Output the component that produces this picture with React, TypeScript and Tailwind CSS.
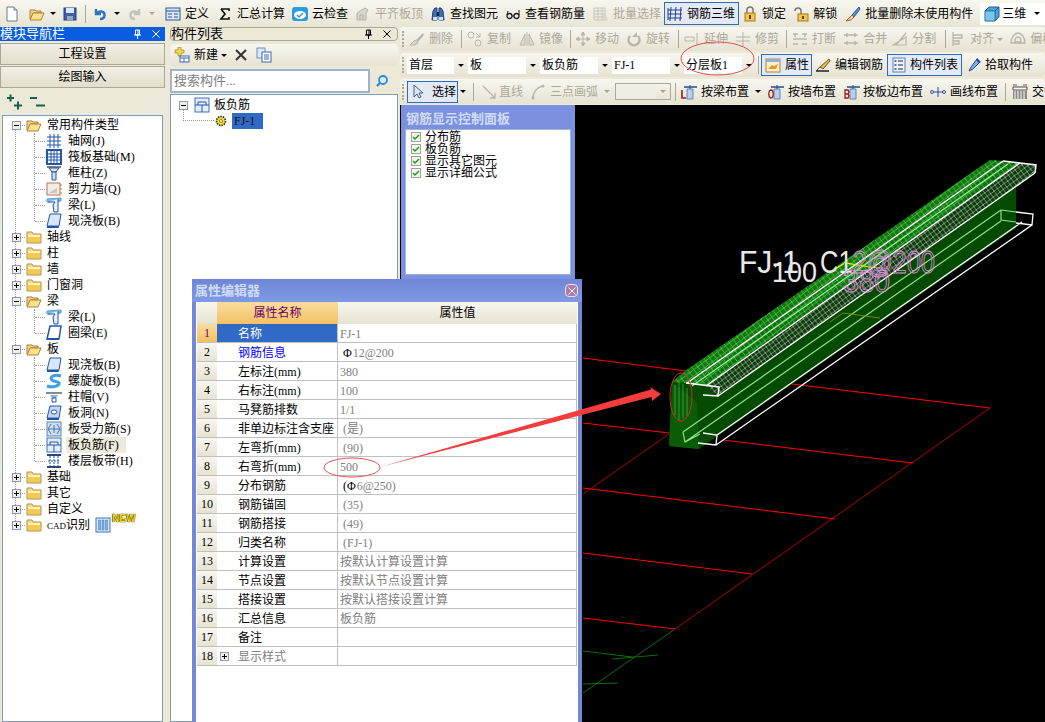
import type { ReactNode } from "react"
import clsx from "clsx"

// ---- small helpers ----
function I({ children, className }: { children: ReactNode; className?: string }) {
	return (
		<svg viewBox="0 0 16 16" className={clsx("h-4 w-4 shrink-0", className)}>
			{children}
		</svg>
	)
}

function Arrow({ className }: { className?: string }) {
	return (
		<svg viewBox="0 0 6 3" className={clsx("h-[3px] w-[6px] shrink-0", className)}>
			<path d="M0 0h6L3 3z" fill="currentColor" />
		</svg>
	)
}

function Sep({ className }: { className?: string }) {
	return <div className={clsx("h-[18px] w-px shrink-0 bg-[#aca899]", className)} />
}

function Grip() {
	return <div className="ml-[2px] h-[16px] w-[3px] shrink-0 border-l-2 border-dotted border-[#aca899]" />
}

function Tool({ icon, label, className, off }: { icon: ReactNode; label: string; className?: string; off?: boolean }) {
	return (
		<div className={clsx("flex shrink-0 items-center gap-1", off && "text-[#aca899]", className)}>
			{icon}
			<span className="whitespace-nowrap">{label}</span>
		</div>
	)
}

// ---- toolbar icons ----
const FileNew = (
	<I>
		<path d="M3 1h7l3 3v11H3z" fill="#fff" stroke="#6b7a8c" />
		<path d="M10 1v3h3" fill="#dde" stroke="#6b7a8c" />
	</I>
)
const OpenFolder = (
	<I>
		<path d="M1 4h5l1 1h5v2H5L2 13H1z" fill="#f3d27a" stroke="#a8843c" />
		<path d="M4 7h11l-3 7H1z" fill="#fbe08f" stroke="#a8843c" />
	</I>
)
const ClosedFolder = (
	<I>
		<path d="M1 3h5l1 2h8v9H1z" fill="#fbdc7d" stroke="#b09048" />
		<path d="M2 6h12v7H2z" fill="#f6c94f" />
		<path d="M2 6h12v2H2z" fill="#fff2bf" />
	</I>
)
const Save = (
	<I>
		<rect x="2" y="2" width="12" height="12" fill="#3f5fa8" stroke="#25407c" />
		<rect x="4" y="2" width="8" height="5" fill="#dfe6f4" />
		<rect x="5" y="10" width="6" height="4" fill="#9aa7c4" />
	</I>
)
const Undo = (
	<I>
		<path d="M4 3v5h5M4.500 7.500C7 4 13 5 12.500 9.500 12.200 12 10 13 8 13" fill="none" stroke="#2f74c4" strokeWidth="2.400" />
	</I>
)
const Redo = (
	<I>
		<path d="M12 3v5H7M11.500 7.500C9 4 3 5 3.500 9.500 3.800 12 6 13 8 13" fill="none" stroke="#c4c3b8" strokeWidth="2.400" />
	</I>
)
const Define = (
	<I>
		<rect x="1" y="2" width="14" height="12" fill="#dbe7f6" stroke="#2b5797" />
		<path d="M1 5h14M3 8h4M3 11h4M9 8h4M9 11h4" stroke="#2b5797" />
	</I>
)
const Sigma = (
	<I>
		<path d="M4 3h8v2M4 3l4 5-4 5h8v-2" fill="none" stroke="#111" strokeWidth="1.600" />
	</I>
)
const CloudCheck = (
	<I>
		<rect x="0" y="1" width="16" height="14" rx="3" fill="#2e9be0" />
		<ellipse cx="8" cy="9" rx="6" ry="4" fill="#fff" />
		<path d="M5 9l2 2 4-4" fill="none" stroke="#2e9be0" strokeWidth="1.500" />
	</I>
)
const AlignTop = (
	<I>
		<path d="M2 14V7l8-5 3 2-2 3v7z" fill="#d9d7cc" stroke="#b3b1a6" />
		<path d="M5 14V9h3v5" fill="none" stroke="#b3b1a6" />
	</I>
)
const Binoculars = (
	<I>
		<path d="M2 14l1-9 2-3h2v12zM14 14l-1-9-2-3H9v12z" fill="#3b6fb6" stroke="#1f3e78" />
		<path d="M7 6h2v4H7z" fill="#222" />
		<path d="M3 14h4v-3H3zM9 14h4v-3H9z" fill="#cfdcf0" />
	</I>
)
const Glasses = (
	<I>
		<circle cx="4.500" cy="10" r="2.500" fill="none" stroke="#222" strokeWidth="1.300" />
		<circle cx="11.500" cy="10" r="2.500" fill="none" stroke="#222" strokeWidth="1.300" />
		<path d="M7 10h2M2 9l1-4M14 9V4" stroke="#222" fill="none" />
	</I>
)
const BatchSelect = (
	<I>
		<path d="M1 2h11v12H1zM1 5h11M1 8h11M1 11h11M5 2v12M9 2v12" fill="none" stroke="#c8c6bc" />
		<path d="M10 8l5 5-2 2-3-3z" fill="#d8d6cc" />
	</I>
)
const Rebar3D = (
	<I>
		<path d="M1 4h14M1 8h14M1 12h14M4 1l-1 14M9 1L8 15M14 1l-1 14" fill="none" stroke="#24408c" />
		<path d="M1 2v12" stroke="#24408c" />
	</I>
)
const Lock = (
	<I>
		<path d="M5 7V4a3 3 0 016 0v3" fill="none" stroke="#7a7a70" strokeWidth="1.500" />
		<rect x="3" y="7" width="10" height="8" fill="#f5c74a" stroke="#a07a20" />
		<rect x="7" y="9" width="2" height="4" fill="#5a4210" />
	</I>
)
const Unlock = (
	<I>
		<path d="M2 5a3 3 0 016 0v3" fill="none" stroke="#7a7a70" strokeWidth="1.500" />
		<rect x="5" y="8" width="10" height="7" fill="#f5c74a" stroke="#a07a20" />
		<rect x="9" y="10" width="2" height="3" fill="#5a4210" />
	</I>
)
const BrushColor = (
	<I>
		<path d="M14 1L7 9l2 2 6-8z" fill="#5b8fd6" stroke="#2b5797" />
		<path d="M7 9l2 2-3 3-5 1 2-2z" fill="#e0d2a8" stroke="#c05a3c" />
	</I>
)
const Cube = (
	<I>
		<path d="M1 5l4-4h10v10l-4 4H1z" fill="#49a3d8" stroke="#1f5f8c" />
		<path d="M1 5h10v10M11 5l4-4" fill="none" stroke="#1f5f8c" />
		<path d="M1.500 5.500h9v9h-9z" fill="#7cc4ec" />
	</I>
)

// gray row
const g = "#b8b6aa"
const GBrush = (
	<I>
		<path d="M14 2L7 9l2 2 6-7z" fill={g} />
		<path d="M6 9l3 3-3 2H1z" fill="#d8d6cc" stroke={g} />
	</I>
)
const GCopy = (
	<I>
		<circle cx="4" cy="4" r="3" fill="none" stroke={g} />
		<circle cx="11" cy="12" r="3" fill="none" stroke={g} />
		<path d="M9 2l4 4M13 2v4h-4" fill="none" stroke={g} />
	</I>
)
const GMirror = (
	<I>
		<path d="M1 14L6 3v11zM15 14L10 3v11z" fill="#dedcd2" stroke={g} />
		<path d="M8 1v14" stroke={g} />
	</I>
)
const GMove = (
	<I>
		<path d="M8 1v14M1 8h14M8 1L6 4h4zM8 15l-2-3h4zM1 8l3-2v4zM15 8l-3-2v4z" fill={g} stroke={g} />
	</I>
)
const GRotate = (
	<I>
		<path d="M12 5a5.500 5.500 0 11-8 0" fill="none" stroke={g} strokeWidth="2.500" />
		<path d="M11 1v5h-5" fill={g} />
	</I>
)
const GExtend = (
	<I>
		<path d="M1 6h9v4H1zM13 2v12" fill="none" stroke={g} />
	</I>
)
const GTrim = (
	<I>
		<path d="M8 1v14M1 6h14M1 10h14" fill="none" stroke={g} />
	</I>
)
const GBreak = (
	<I>
		<path d="M1 3h5M10 3h5M1 13h5M10 13h5M1 8h14M3 3v3M13 3v3" fill="none" stroke={g} strokeWidth="1.500" />
	</I>
)
const GMerge = (
	<I>
		<path d="M1 4h14M1 12h14M4 2v4M12 2v4M4 10v4M12 10v4" fill="none" stroke={g} strokeWidth="1.500" />
	</I>
)
const GSplit = (
	<I>
		<path d="M1 14h13V6L1 14zM4 14l10-12" fill="none" stroke={g} strokeWidth="1.200" />
	</I>
)
const GAlign = (
	<I>
		<path d="M3 1v14M3 4h9v3H3zM3 10h6v3H3z" fill="none" stroke={g} strokeWidth="1.300" />
	</I>
)
const GOffset = (
	<I>
		<path d="M1 12c0-6 4-10 7-10s7 4 7 10zM5 11c0-3 1-5 3-5s3 2 3 5z" fill="none" stroke={g} strokeWidth="1.300" />
	</I>
)

const Prop = (
	<I>
		<rect x="1" y="2" width="14" height="13" fill="#fdf0c8" stroke="#c07a20" />
		<path d="M1 2h14v3H1z" fill="#8db0dc" />
		<path d="M3 12l4-4 2 1 4-2-2 5z" fill="#e09a28" />
	</I>
)
const Pencil = (
	<I>
		<path d="M14 2l1 2-7 8-3-2z" fill="#e6b64a" stroke="#7a5a20" />
		<path d="M1 14h13" stroke="#222" strokeWidth="1.500" />
		<path d="M2 14c1-3 2-3 3-4" fill="none" stroke="#222" />
	</I>
)
const ListIco = (
	<I>
		<rect x="2" y="1" width="12" height="14" fill="#eef3fa" stroke="#5a7fb8" />
		<path d="M7 4h5M7 8h5M7 12h5" stroke="#224" />
		<path d="M3.500 3h2v2h-2zM3.500 7h2v2h-2zM3.500 11h2v2h-2z" fill="#3a78c8" />
	</I>
)
const Dropper = (
	<I>
		<path d="M11 2l3 3-7 7-4 2 2-4z" fill="#7fb0e8" stroke="#1f4a9c" />
		<path d="M11 1l4 4-2 1-3-3z" fill="#1f4a9c" />
	</I>
)
const Cursor = (
	<I>
		<path d="M4 1v12l3-3 2 4 2-1-2-4h4z" fill="#dbe6f6" stroke="#44608c" />
	</I>
)
const GLine = (
	<I>
		<path d="M2 2l12 12M14 9v5H9" fill="none" stroke={g} strokeWidth="1.300" />
	</I>
)
const GArc = (
	<I>
		<path d="M3 14C3 8 7 3 13 2" fill="none" stroke={g} strokeWidth="1.500" />
		<circle cx="13" cy="2" r="1.500" fill={g} />
		<circle cx="3" cy="14" r="1.500" fill={g} />
	</I>
)
const Post = ({ c, letter }: { c: string; letter: "L" | "Q" | "B" }) => (
	<I>
		<path d="M6 5h6v10H6z" fill="#b9d0ea" stroke="#5f86b4" />
		<path d="M3 3h13" stroke="#274a8c" strokeWidth="1.500" />
		<path d="M9 1v4" stroke="#274a8c" />
		{letter === "L" && <path d="M1 6v8h4" fill="none" stroke={c} strokeWidth="1.600" />}
		{letter === "Q" && <ellipse cx="3" cy="10" rx="2.200" ry="4" fill="none" stroke={c} strokeWidth="1.300" />}
		{letter === "B" && <path d="M1 6h3l1 2-1 2 1 2-1 2H1zM1 10h3" fill="none" stroke={c} strokeWidth="1.300" />}
	</I>
)
const DrawLine = (
	<I>
		<path d="M3 8h10M8 3v10" stroke="#2b4f9c" fill="none" />
		<circle cx="2" cy="8" r="1.500" fill="#fff" stroke="#2b4f9c" />
		<circle cx="14" cy="8" r="1.500" fill="#fff" stroke="#2b4f9c" />
	</I>
)
const CrossIco = (
	<I>
		<path d="M1 3h14v3H1z" fill="#fff" stroke="#444" />
		<rect x="1" y="7" width="14" height="8" fill="#8a8a80" />
		<path d="M3 7v8M6 7v8M9 7v8M12 7v8" stroke="#fff" />
		<path d="M1 1h4M11 1h4" stroke="#c03030" />
	</I>
)

// ---- tree icons ----
const b = "#2456a8"
const TGrid = (
	<I>
		<path d="M1 4h14M1 8h14M1 12h14M4 1v14M8 1v14M12 1v14" fill="none" stroke={b} />
	</I>
)
const TRaft = (
	<I>
		<rect x="1" y="1" width="14" height="14" fill="#fff" stroke={b} strokeWidth="2" />
		<path d="M5 2v12M8 2v12M11 2v12M2 5h12M2 8h12M2 11h12" stroke={b} />
	</I>
)
const TColumn = (
	<I>
		<path d="M1 1h14v2H1z" fill="#7f7f7f" />
		<path d="M3 3h10l-3 4H6z" fill="#dbe8f7" stroke={b} />
		<path d="M6 7h4v8H6z" fill="#cfe0f4" stroke={b} />
	</I>
)
const TWall = (
	<I>
		<rect x="1" y="2" width="13" height="12" fill="#f2ede3" stroke="#b8745a" />
		<path d="M3 12l8-5v5z" fill="#c8c6c0" />
		<path d="M15 3v2M15 7v2M15 11v2" stroke="#e0701c" />
	</I>
)
const TBeam = (
	<I>
		<path d="M1 2l14-1v3L1 5z" fill="#7fb8e8" stroke="#5a9bd4" />
		<path d="M2 5h7l-2 3 1 7h4V2" fill="#e6f0fa" stroke={b} />
	</I>
)
const TSlab = (
	<I>
		<path d="M4 1h11l-2 12H1z" fill="#d8e6f7" stroke={b} />
		<path d="M1 13h12l-0.500 2H1z" fill={b} />
	</I>
)
const TRing = (
	<I>
		<path d="M4 1h11l-2 13H1z" fill="#fff" stroke={b} strokeWidth="1.500" />
		<path d="M1 14h12" stroke={b} strokeWidth="2" />
	</I>
)
const TSpiral = (
	<I>
		<path d="M15 3C8 1 3 4 6 7c2 2 6 1 7 3 1 3-7 5-12 3" fill="none" stroke="#3da0e6" strokeWidth="3" />
	</I>
)
const TCap = (
	<I>
		<path d="M0 3h16v2H0z" fill="#7f8a96" />
		<path d="M4 6h8l-2 3H6z" fill="#8fb0d8" />
		<path d="M6 9h4v4H6z" fill="#fff" stroke={b} />
	</I>
)
const THole = (
	<I>
		<path d="M4 1h11l-2 12H1z" fill="#c4d8f2" stroke={b} />
		<ellipse cx="8" cy="7" rx="3" ry="2" fill="#fff" stroke={b} />
		<path d="M1 13h12v2H1z" fill={b} />
	</I>
)
const TForce = (
	<I>
		<rect x="1" y="1" width="14" height="14" fill="#cfe0f4" stroke="#5f86b4" />
		<path d="M5 3l-3 5 3 5M11 3l3 5-3 5M2 8h12M8 4v8" fill="none" stroke="#4677b4" />
	</I>
)
const TNeg = (
	<I>
		<rect x="1" y="1" width="14" height="14" fill="#e4eefa" stroke="#3f72bc" />
		<path d="M4 5h8v3M4 5v3M1 8h14M8 8v7" fill="none" stroke={b} />
	</I>
)
const TBand = (
	<I>
		<path d="M1 2h14M1 14h14" stroke="#2a4a7c" strokeWidth="2" />
		<path d="M4 3v10M8 3v10M12 3v10M2 8h12" stroke={b} strokeDasharray="2 1" />
	</I>
)
const TCad = (
	<I>
		<rect x="1" y="1" width="14" height="14" fill="#dbe9f8" stroke="#3f72bc" />
		<path d="M3.500 3h2v10h-2zM7 3h2v10H7zM10.500 3h2v10h-2z" fill="#7fb0e8" stroke="#3f72bc" strokeWidth="0.500" />
	</I>
)
const Gear = (
	<svg viewBox="0 0 12 12" className="h-3 w-3 shrink-0">
		<circle cx="6" cy="6" r="4.500" fill="#f6e020" stroke="#222" strokeDasharray="1.500 1" strokeWidth="1.600" />
		<circle cx="6" cy="6" r="1.500" fill="#fff" stroke="#333" strokeWidth="0.600" />
	</svg>
)

function Box({ plus }: { plus?: boolean }) {
	return (
		<svg viewBox="0 0 9 9" className="relative h-[9px] w-[9px] shrink-0">
			<rect x="0.500" y="0.500" width="8" height="8" fill="#f2f0e6" stroke="#8a9ab0" />
			<path d="M2 4.500h5" stroke="#000" />
			{plus && <path d="M4.500 2v5" stroke="#000" />}
		</svg>
	)
}

function Pin({ color = "#000" }: { color?: string }) {
	return (
		<svg viewBox="0 0 9 10" className="h-[10px] w-[9px] shrink-0">
			<path d="M2.500 1h4v5h-4zM1 6h7M4.500 6v4" fill="none" stroke={color} />
			<path d="M5 1v5" stroke={color} />
		</svg>
	)
}

function Cross({ color = "#000" }: { color?: string }) {
	return (
		<svg viewBox="0 0 8 8" className="h-2 w-2 shrink-0">
			<path d="M0.500 0.500l7 7M7.500 0.500l-7 7" stroke={color} fill="none" />
		</svg>
	)
}

// ---- left tree ----
function Leaf({ icon, label, on }: { icon: ReactNode; label: string; on?: boolean }) {
	return (
		<div className="relative flex h-4 items-center pl-[43px]">
			<div className="absolute left-[32px] top-2 w-[10px] border-t border-dotted border-[#999]" />
			{icon}
			<span className={clsx("ml-1 whitespace-nowrap px-[2px]", on && "bg-[#ecebdc] pr-[7px]")}>{label}</span>
		</div>
	)
}

function Folder({ label, open, children, extra }: { label: ReactNode; open?: boolean; children?: ReactNode; extra?: ReactNode }) {
	return (
		<div>
			<div className="relative flex h-4 items-center pl-[9px]">
				<div className="absolute left-[14px] top-2 w-[10px] border-t border-dotted border-[#999]" />
				<Box plus={!open} />
				<div className="relative ml-[5px] w-4 bg-white">{open ? OpenFolder : ClosedFolder}</div>
				<span className="ml-[5px] whitespace-nowrap">{label}</span>
				{extra}
			</div>
			{children && (
				<div className="relative">
					<div className="absolute bottom-2 left-[31px] top-0 border-l border-dotted border-[#999]" />
					{children}
				</div>
			)}
		</div>
	)
}

function LeftPanel() {
	return (
		<div className="flex w-[165px] shrink-0 flex-col">
			<div className="flex h-[14px] items-center justify-between bg-[#0a5ce0] pr-[5px] text-[13px] text-white">
				<span>模块导航栏</span>
				<div className="flex items-center gap-[10px]">
					<Pin color="#fff" />
					<Cross color="#fff" />
				</div>
			</div>
			<div className="mt-[2px] flex h-[22px] items-center justify-center border border-[#aca899] bg-gradient-to-b from-[#f1efe4] to-[#e2dfcd]">工程设置</div>
			<div className="mt-px flex h-[22px] items-center justify-center border border-[#aca899] bg-gradient-to-b from-[#f1efe4] to-[#e2dfcd]">绘图输入</div>
			<div className="flex h-[27px] items-center gap-[7px] pl-[7px]">
				<I>
					<path d="M0 4h7M3.500 0.500v7" stroke="#14604a" strokeWidth="2" />
					<path d="M7 11.500h8M11 7.500v8" stroke="#14604a" strokeWidth="2" />
				</I>
				<I>
					<path d="M0 4h7" stroke="#14604a" strokeWidth="2" />
					<path d="M6 11.500h9" stroke="#14604a" strokeWidth="2" />
				</I>
			</div>
			<div className="relative mx-[2px] flex-1 border border-[#7f9db9] bg-white pt-[1px]">
				<div className="absolute bottom-[196px] left-[12px] top-[9px] border-l border-dotted border-[#999]" />
				<Folder label="常用构件类型" open>
					<Leaf icon={TGrid} label="轴网(J)" />
					<Leaf icon={TRaft} label="筏板基础(M)" />
					<Leaf icon={TColumn} label="框柱(Z)" />
					<Leaf icon={TWall} label="剪力墙(Q)" />
					<Leaf icon={TBeam} label="梁(L)" />
					<Leaf icon={TSlab} label="现浇板(B)" />
				</Folder>
				<Folder label="轴线" />
				<Folder label="柱" />
				<Folder label="墙" />
				<Folder label="门窗洞" />
				<Folder label="梁" open>
					<Leaf icon={TBeam} label="梁(L)" />
					<Leaf icon={TRing} label="圈梁(E)" />
				</Folder>
				<Folder label="板" open>
					<Leaf icon={TSlab} label="现浇板(B)" />
					<Leaf icon={TSpiral} label="螺旋板(B)" />
					<Leaf icon={TCap} label="柱帽(V)" />
					<Leaf icon={THole} label="板洞(N)" />
					<Leaf icon={TForce} label="板受力筋(S)" />
					<Leaf icon={TNeg} label="板负筋(F)" on />
					<Leaf icon={TBand} label="楼层板带(H)" />
				</Folder>
				<Folder label="基础" />
				<Folder label="其它" />
				<Folder label="自定义" />
				<Folder
					label={
						<>
							<span className="text-[9px]">CAD</span>识别
						</>
					}
					extra={
						<div className="ml-[5px] flex items-start">
							{TCad}
							<span className="-mt-[3px] ml-[1px] font-['Liberation_Sans',sans-serif] text-[10px] font-bold leading-[10px] text-[#ffe000] [text-shadow:0_0_1px_#000,0_0_1px_#000]">NEW</span>
						</div>
					}
				/>
			</div>
		</div>
	)
}

const NewIco = (
	<I>
		<path d="M1 3h3V0h3v3h3v3H7v3H4V6H1z" fill="#f6d84a" stroke="#a08820" strokeWidth="0.700" />
		<rect x="6" y="9" width="9" height="6" fill="#fff" stroke="#3a68b0" />
		<path d="M6 11h9M10 11v4" stroke="#3a68b0" />
	</I>
)

function ListPanel() {
	return (
		<div className="ml-[5px] flex w-[228px] shrink-0 flex-col">
			<div className="flex h-[14px] items-center justify-between rounded-sm border border-[#aca899] pr-[6px] text-[13px]">
				<span>构件列表</span>
				<div className="flex items-center gap-[10px]">
					<Pin />
					<Cross />
				</div>
			</div>
			<div className="mt-[3px] flex h-[22px] items-center rounded-sm bg-gradient-to-b from-[#f8f7f0] to-[#e6e3d2] pl-1">
				{NewIco}
				<span className="ml-1">新建</span>
				<Arrow className="ml-[3px]" />
				<svg viewBox="0 0 14 14" className="ml-[7px] h-[14px] w-[14px] shrink-0">
					<path d="M2 2l10 10M12 2L2 12" stroke="#333" strokeWidth="2" />
				</svg>
				<I className="ml-[8px]">
					<rect x="1" y="1" width="8" height="10" fill="#dfe9f7" stroke="#6a8cc0" />
					<rect x="6" y="5" width="9" height="10" fill="#fff" stroke="#3a68b0" />
					<path d="M8 8h5M8 10h5M8 12h5" stroke="#3a68b0" />
				</I>
			</div>
			<div className="mt-[3px] flex h-[24px] items-center">
				<div className="flex h-[24px] w-[200px] items-center border-2 border-[#9db4cc] bg-white pl-[2px] text-[13px] text-[#808080]">搜索构件...</div>
				<svg viewBox="0 0 14 14" className="ml-[5px] h-[14px] w-[14px] shrink-0">
					<circle cx="8" cy="6" r="4" fill="#d8ecff" stroke="#2e8ae0" strokeWidth="1.800" />
					<path d="M5 9l-3 3" stroke="#2e8ae0" strokeWidth="2.400" />
				</svg>
			</div>
			<div className="mt-[1px] flex-1 border border-[#7f9db9] bg-white pt-[2px]">
				<div className="flex h-4 items-center pl-[8px]">
					<Box />
					<div className="ml-[6px]">{TNeg}</div>
					<span className="ml-[4px]">板负筋</span>
				</div>
				<div className="relative flex h-4 items-center pl-[44px]">
					<div className="absolute left-[12px] top-[-4px] h-[12px] w-[31px] border-b border-l border-dotted border-[#999]" />
					{Gear}
					<span className="ml-[5px] flex h-4 w-[31px] items-center bg-[#316ac5] pl-[2px] text-[#111]">FJ-1</span>
				</div>
			</div>
		</div>
	)
}

function Select({ label, className, off }: { label?: string; className: string; off?: boolean }) {
	return (
		<div className={clsx("flex h-[17px] shrink-0 items-center", className)}>
			<div className={clsx("h-full flex-1 pl-[2px]", off ? "bg-[#f0eee2]" : "bg-white")}>{label}</div>
			<div className="flex h-full w-[14px] items-center justify-center">
				<Arrow className={off ? "text-[#aca899]" : "text-black"} />
			</div>
		</div>
	)
}

function Row({ children, className }: { children: ReactNode; className?: string }) {
	return <div className={clsx("flex shrink-0 items-center overflow-hidden rounded-sm bg-gradient-to-b from-[#f8f7f0] to-[#e6e3d2]", className)}>{children}</div>
}

// ---- 3D view ----
function Beam() {
	return (
		<svg viewBox="400 105 645 617" className="block h-[617px] w-[645px]">
			<defs>
				<pattern id="meshG" width="7" height="7" patternUnits="userSpaceOnUse" patternTransform="rotate(8)">
					<path d="M0 0l7 7M7 0L0 7" stroke="#58cc58" strokeWidth="0.800" />
				</pattern>
				<pattern id="meshP" width="6" height="6" patternUnits="userSpaceOnUse" patternTransform="rotate(8)">
					<path d="M0 0l6 6M6 0L0 6" stroke="#c0aeae" strokeWidth="0.700" />
				</pattern>
			</defs>
			<g stroke="#ff0000" strokeWidth="1" fill="none">
				<path d="M583 358L686 371M792 384L990 408M583 423L669 433M723 440L913 463M583 488L835 519M583 553L752 574M583 618L675 629" />
				<path d="M990 408L675 629M669 434L583 494" strokeWidth="0.700" />
			</g>
			<path d="M675 629L583 693M583 651L632 657M612 659L658 655M583 684L618 683" stroke="#0a8a0a" strokeWidth="0.800" fill="none" />

			<path d="M669 446L699 449L1016 228V175L1003 161H990L685 371L672 382z" fill="#044a00" />
			<path d="M669 446L699 449L697 402L672 382z" fill="#0a5c07" />

			<path d="M672 382L685 371L990 160L1003 161L687 383z" fill="#14780f" />
			<path d="M672 382L685 371L990 160L1003 161L687 383z" fill="url(#meshG)" />
			<path d="M687 383L1003 161L1020 163L706 386z" fill="#107010" />
			<path d="M687 383L1003 161L1020 163L706 386z" fill="url(#meshG)" />
			<path d="M706 386L1020 163L1036 165L1035 173L718 396z" fill="#06400a" />
			<path d="M706 386L1020 163L1036 165L1035 173L718 396z" fill="url(#meshP)" />

			<path d="M692 386L1008 164" stroke="#9af09a" strokeWidth="1.200" />
			<path d="M687 383L1003 161M706 386L1020 163M718 396L1035 173" stroke="#fff" strokeWidth="1.300" fill="none" />
			<path d="M1003 161L1036 165L1035 173M686 383L719 387L718 396L703 395" stroke="#fff" strokeWidth="1.500" fill="none" />

			<path d="M683 432L1001 210M685 442L1001 221M683 432L685 442L700 434M1001 210L1016 212M1001 210V220L1016 222" stroke="#8fe08f" strokeWidth="1.200" fill="none" />
			<path d="M703 433L717 435L716 445L698 443M717 435L1022 222M716 445L1032 225M1016 212L1033 214L1032 225L1016 223" stroke="#fff" strokeWidth="1.300" fill="none" />

			<path d="M675 385v30M679 382v38M683 384v34M687 388v28" stroke="#6fd06f" strokeWidth="0.500" />
			<path d="M830 322L843 313L880 318" stroke="#7a8000" fill="none" />
			<path d="M837 268L845 263L870 267L880 268" stroke="#f0f000" strokeWidth="1.200" fill="none" />
			<path d="M834 270l3-2M845 263v3M875 268h3" stroke="#2020e0" strokeWidth="1.200" />

			<g className="font-['Liberation_Sans',sans-serif]">
				<text x="739" y="273" fontSize="31" fill="#e8e8e8" textLength="60" lengthAdjust="spacingAndGlyphs">FJ-1</text>
				<text x="772" y="282" fontSize="29" fill="#e8e8e8" textLength="45" lengthAdjust="spacingAndGlyphs">100</text>
				<text x="820" y="273" fontSize="31" fill="none" stroke="#e090e0" strokeWidth="0.900" textLength="115" lengthAdjust="spacingAndGlyphs">
					<tspan fill="#e8e8e8" stroke="none">C1</tspan>2@200
				</text>
				<text x="843" y="292" fontSize="31" fill="none" stroke="#e090e0" strokeWidth="0.900" textLength="47" lengthAdjust="spacingAndGlyphs">380</text>
			</g>
		</svg>
	)
}

function RebarPanel() {
	const items = ["分布筋", "板负筋", "显示其它图元", "显示详细公式"]
	return (
		<div className="absolute left-px top-0 h-[174px] w-[174px] bg-[#7b90de] px-[4px]">
			<div className="flex h-[24px] items-center pl-[1px] pt-1 text-[13px] font-bold text-[#cfdcf6]">钢筋显示控制面板</div>
			<div className="h-[146px] border border-[#9db4cc] bg-white pl-[5px] pt-[1px]">
				{items.map((t) => (
					<div key={t} className="flex h-[12px] items-center gap-1">
						<svg viewBox="0 0 10 10" className="h-[10px] w-[10px] shrink-0">
							<rect x="0.500" y="0.500" width="9" height="9" fill="#f4f4ec" stroke="#a0a098" />
							<path d="M2 5l2 2 4-4" fill="none" stroke="#18a018" strokeWidth="1.500" />
						</svg>
						<span className="whitespace-nowrap">{t}</span>
					</div>
				))}
			</div>
		</div>
	)
}

// ---- property editor ----
const rows: { name: string; value?: string; sym?: string; kind?: "sel" | "blue" | "tree" }[] = [
	{ name: "名称", value: "FJ-1", kind: "sel" },
	{ name: "钢筋信息", value: "12@200", sym: " Φ", kind: "blue" },
	{ name: "左标注(mm)", value: "380" },
	{ name: "右标注(mm)", value: "100" },
	{ name: "马凳筋排数", value: "1/1" },
	{ name: "非单边标注含支座", value: " (是)" },
	{ name: "左弯折(mm)", value: " (90)" },
	{ name: "右弯折(mm)", value: "500" },
	{ name: "分布钢筋", value: "6@250)", sym: " (Φ" },
	{ name: "钢筋锚固", value: " (35)" },
	{ name: "钢筋搭接", value: " (49)" },
	{ name: "归类名称", value: " (FJ-1)" },
	{ name: "计算设置", value: "按默认计算设置计算" },
	{ name: "节点设置", value: "按默认节点设置计算" },
	{ name: "搭接设置", value: "按默认搭接设置计算" },
	{ name: "汇总信息", value: "板负筋" },
	{ name: "备注" },
	{ name: "显示样式", kind: "tree" },
]

function PropEditor() {
	return (
		<div className="absolute left-[192px] top-[279px] flex h-[443px] w-[390px] flex-col border-x-4 border-[#7488d8] bg-white">
			<div className="-mx-[4px] flex h-[23px] shrink-0 items-center justify-between bg-gradient-to-b from-[#6f86d6] to-[#7f9ae4] pl-[3px] pr-[4px] text-[13px] font-bold text-[#cfdcf6]">
				<span>属性编辑器</span>
				<div className="flex h-[13px] w-[13px] items-center justify-center rounded-sm border border-[#e8e0f0] bg-[#b07aa8]">
					<Cross color="#fff" />
				</div>
			</div>
			<div className="mx-px flex h-[22px] w-[380px] shrink-0">
				<div className="w-[20px] bg-gradient-to-b from-[#f8f7f0] to-[#e6e3d2]" />
				<div className="flex w-[121px] items-center justify-center bg-gradient-to-b from-[#fbdd9e] to-[#f3c062] text-[#660066]">属性名称</div>
				<div className="flex flex-1 items-center justify-center bg-gradient-to-b from-[#f8f7f0] to-[#e6e3d2]">属性值</div>
			</div>
			<div className="mx-px w-[380px] border-r border-[#c0c0c0]">
				{rows.map((r, i) => (
					<div key={r.name} className="flex h-[19px] border-b border-[#c0c0c0]">
						<div className={clsx("flex w-[20px] shrink-0 items-center justify-center bg-gradient-to-b", r.kind === "sel" ? "from-[#fbdd9e] to-[#f3c062] text-[#660066]" : "from-[#f8f7f0] to-[#e6e3d2]")}>{i + 1}</div>
						<div className={clsx("flex w-[121px] shrink-0 items-center whitespace-nowrap border-r border-[#c0c0c0] pl-[21px] pt-px", r.kind === "sel" && "bg-[#316ac5] text-white", r.kind === "blue" && "text-[#0000ff]", r.kind === "tree" && "relative text-[#808080]")}>
							{r.kind === "tree" && (
								<span className="absolute left-[3px]">
									<Box plus />
								</span>
							)}
							{r.name}
						</div>
						<div className="flex flex-1 items-center whitespace-pre pl-[2px] pt-px text-[#808080]">
							{r.sym && <span className="mr-px text-black">{r.sym}</span>}
							{r.value}
						</div>
					</div>
				))}
			</div>
		</div>
	)
}

export default function App() {
	return (
		<div className="relative flex h-[722px] w-[1045px] flex-col overflow-hidden bg-[#ece9d8] font-['Liberation_Serif','Noto_Sans_CJK_SC',serif] text-[12px] leading-4 text-black">
			<div className="flex h-[27px] shrink-0 items-center bg-gradient-to-b from-[#f8f7f0] to-[#e8e5d5] pl-[4px]">
				{FileNew}
				<div className="ml-[9px]">{OpenFolder}</div>
				<Arrow className="ml-[5px]" />
				<div className="ml-[6px]">{Save}</div>
				<Sep className="ml-[7px]" />
				<div className="ml-[6px]">{Undo}</div>
				<Arrow className="ml-[6px]" />
				<div className="ml-[7px]">{Redo}</div>
				<Arrow className="ml-[6px] text-[#aca899]" />
				<Tool icon={Define} label="定义" className="ml-[10px]" />
				<Tool icon={Sigma} label="汇总计算" className="ml-[8px]" />
				<Tool icon={CloudCheck} label="云检查" className="ml-[7px]" />
				<Tool icon={AlignTop} label="平齐板顶" className="ml-[7px]" off />
				<Tool icon={Binoculars} label="查找图元" className="ml-[7px]" />
				<Tool icon={Glasses} label="查看钢筋量" className="ml-[7px]" />
				<Tool icon={BatchSelect} label="批量选择" className="ml-[8px]" off />
				<Tool icon={Rebar3D} label="钢筋三维" className="ml-[3px] h-[23px] w-[75px] border border-[#316ac5] bg-[#e4eaf4] pl-[2px]" />
				<Tool icon={Lock} label="锁定" className="ml-[3px]" />
				<Tool icon={Unlock} label="解锁" className="ml-[7px]" />
				<Tool icon={BrushColor} label="批量删除未使用构件" className="ml-[8px]" />
				<div className="ml-[7px] flex h-[22px] w-[65px] shrink-0 items-center bg-white pl-[4px]">
					{Cube}
					<span className="ml-[2px]">三维</span>
					<Arrow className="ml-[8px]" />
				</div>
			</div>

			<div className="flex min-h-0 flex-1">
				<LeftPanel />
				<ListPanel />
				<div className="ml-[2px] flex min-w-0 flex-1 flex-col">
					<Row className="h-[24px] text-[#aca899]">
						<Grip />
						<Tool icon={GBrush} label="删除" className="ml-[4px]" />
						<Sep className="ml-[8px]" />
						<Tool icon={GCopy} label="复制" className="ml-[5px]" />
						<Tool icon={GMirror} label="镜像" className="ml-[8px]" />
						<Sep className="ml-[7px]" />
						<Tool icon={GMove} label="移动" className="ml-[4px]" />
						<Tool icon={GRotate} label="旋转" className="ml-[7px]" />
						<Sep className="ml-[8px]" />
						<Tool icon={GExtend} label="延伸" className="ml-[5px]" />
						<Tool icon={GTrim} label="修剪" className="ml-[7px]" />
						<Sep className="ml-[7px]" />
						<Tool icon={GBreak} label="打断" className="ml-[5px]" />
						<Tool icon={GMerge} label="合并" className="ml-[7px]" />
						<Tool icon={GSplit} label="分割" className="ml-[5px]" />
						<Sep className="ml-[9px]" />
						<Tool icon={GAlign} label="对齐" className="ml-[4px]" />
						<Arrow className="ml-[3px]" />
						<Tool icon={GOffset} label="偏移" className="ml-[7px]" />
					</Row>
					<Row className="mt-[2px] h-[24px]">
						<Grip />
						<Select label="首层" className="ml-[2px] w-[61px]" />
						<Select label="板" className="w-[72px]" />
						<Select label="板负筋" className="w-[72px]" />
						<Select label="FJ-1" className="w-[72px]" />
						<Select label="分层板1" className="w-[72px]" />
						<Sep className="ml-[2px]" />
						<Tool icon={Prop} label="属性" className="ml-[2px] h-[22px] w-[51px] border border-[#316ac5] bg-[#e4eaf4] pl-[3px]" />
						<Tool icon={Pencil} label="编辑钢筋" className="ml-[3px]" />
						<Tool icon={ListIco} label="构件列表" className="ml-[4px] h-[22px] w-[75px] gap-[3px] border border-[#316ac5] bg-[#e4eaf4] pl-[3px]" />
						<Tool icon={Dropper} label="拾取构件" className="ml-[4px] gap-[3px]" />
					</Row>
					<Row className="mb-px mt-[2px] h-[25px]">
						<Grip />
						<div className="ml-[2px] flex h-[22px] w-[51px] shrink-0 items-center gap-[6px] border border-[#316ac5] bg-[#e4eaf4] pl-[2px]">
							{Cursor}
							<span>选择</span>
						</div>
						<Arrow className="ml-[2px]" />
						<Sep className="ml-[7px]" />
						<Tool icon={GLine} label="直线" className="ml-[7px] gap-[2px]" off />
						<Tool icon={GArc} label="三点画弧" className="ml-[7px]" off />
						<Arrow className="ml-[6px] text-[#aca899]" />
						<Select className="ml-[5px] w-[56px] border border-[#aca899]" off />
						<Sep className="ml-[4px]" />
						<Tool icon={<Post c="#a01818" letter="L" />} label="按梁布置" className="ml-[5px]" />
						<Arrow className="ml-[6px]" />
						<Tool icon={<Post c="#a01818" letter="Q" />} label="按墙布置" className="ml-[7px]" />
						<Tool icon={<Post c="#a01818" letter="B" />} label="按板边布置" className="ml-[8px] gap-[3px]" />
						<Tool icon={DrawLine} label="画线布置" className="ml-[7px]" />
						<Sep className="ml-[7px]" />
						<Tool icon={CrossIco} label="交错布置" className="ml-[6px]" />
					</Row>
					<div className="relative min-h-0 flex-1 overflow-hidden bg-black">
						<Beam />
						<RebarPanel />
					</div>
				</div>
			</div>

			<PropEditor />

			{/* red annotations drawn on top of the shot */}
			<svg viewBox="0 0 1045 722" className="pointer-events-none absolute inset-0 h-[722px] w-[1045px]">
				<ellipse cx="717.500" cy="58.500" rx="36.500" ry="16.500" fill="none" stroke="#e05050" />
				<ellipse cx="352" cy="467.500" rx="28" ry="9.500" fill="none" stroke="#e05050" />
				<ellipse cx="681" cy="397" rx="11" ry="24" fill="none" stroke="#c83030" />
				<path d="M380 467L651 389.500L650 387L661 394L652 401L651.500 397z" fill="#f53c3c" />
			</svg>
		</div>
	)
}
